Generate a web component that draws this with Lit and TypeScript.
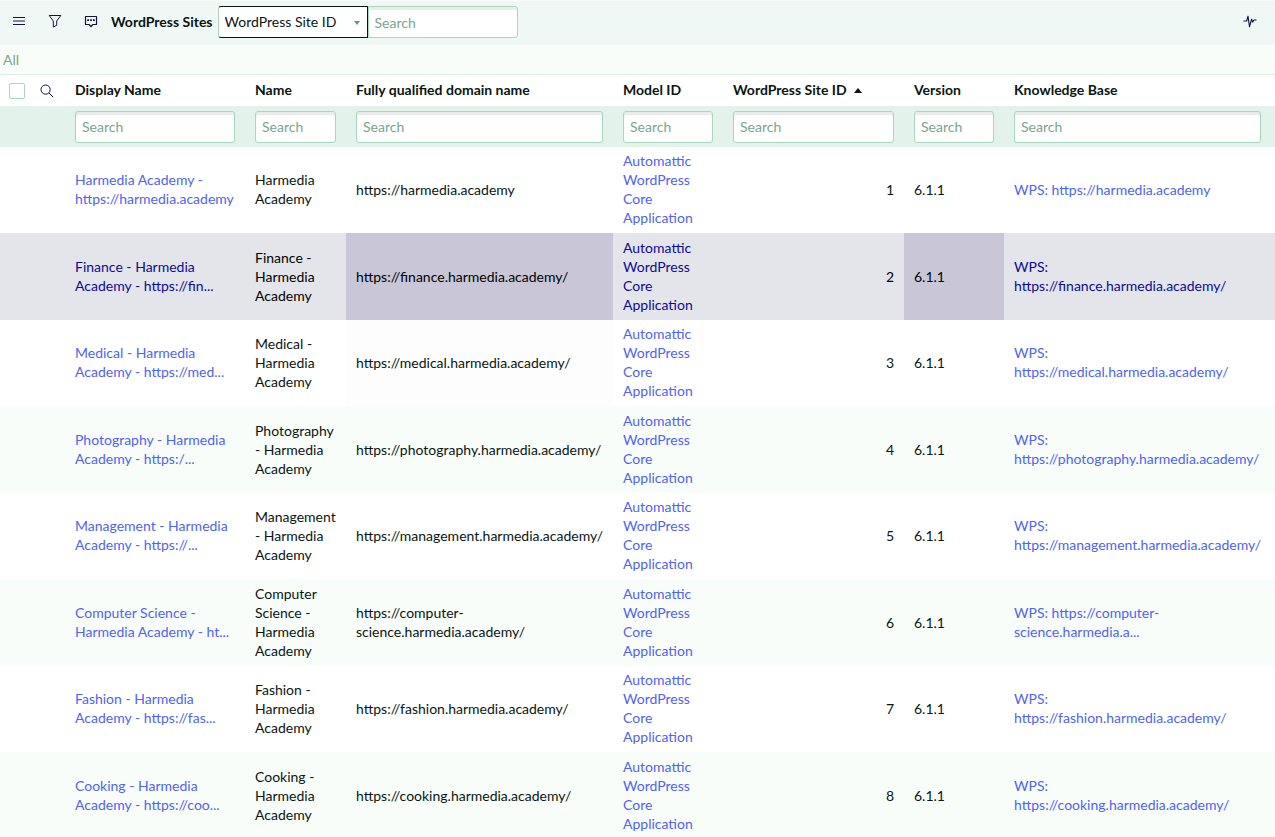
import { LitElement, html, css, svg } from "lit";
import { customElement, state } from "lit/decorators.js";
import { classMap } from "lit/directives/class-map.js";

interface Site {
  display: string;
  name: string;
  domain: string;
  id: number;
  kb: string;
}

const SITES: Site[] = [
  { display: "Harmedia Academy - https://harmedia.academy", name: "Harmedia Academy", domain: "https://harmedia.academy", id: 1, kb: "WPS: https://harmedia.academy" },
  { display: "Finance - Harmedia Academy - https://fin...", name: "Finance - Harmedia Academy", domain: "https://finance.harmedia.academy/", id: 2, kb: "WPS: https://finance.harmedia.academy/" },
  { display: "Medical - Harmedia Academy - https://med...", name: "Medical - Harmedia Academy", domain: "https://medical.harmedia.academy/", id: 3, kb: "WPS: https://medical.harmedia.academy/" },
  { display: "Photography - Harmedia Academy - https:/...", name: "Photography - Harmedia Academy", domain: "https://photography.harmedia.academy/", id: 4, kb: "WPS: https://photography.harmedia.academy/" },
  { display: "Management - Harmedia Academy - https://...", name: "Management - Harmedia Academy", domain: "https://management.harmedia.academy/", id: 5, kb: "WPS: https://management.harmedia.academy/" },
  { display: "Computer Science - Harmedia Academy - ht...", name: "Computer Science - Harmedia Academy", domain: "https://computer-science.harmedia.academy/", id: 6, kb: "WPS: https://computer-science.harmedia.a..." },
  { display: "Fashion - Harmedia Academy - https://fas...", name: "Fashion - Harmedia Academy", domain: "https://fashion.harmedia.academy/", id: 7, kb: "WPS: https://fashion.harmedia.academy/" },
  { display: "Cooking - Harmedia Academy - https://coo...", name: "Cooking - Harmedia Academy", domain: "https://cooking.harmedia.academy/", id: 8, kb: "WPS: https://cooking.harmedia.academy/" },
];

const COLUMNS = [
  { key: "display", label: "Display Name" },
  { key: "name", label: "Name" },
  { key: "domain", label: "Fully qualified domain name" },
  { key: "model", label: "Model ID" },
  { key: "id", label: "WordPress Site ID" },
  { key: "version", label: "Version" },
  { key: "kb", label: "Knowledge Base" },
];

const menuIcon = svg`<path d="M1 3.5h12M1 7h12M1 10.5h12"/>`;
const filterIcon = svg`<path d="M1.2 1.5h11.6L8.7 7v4.3L5.3 13V7z" stroke-linejoin="round"/>`;
const chatIcon = svg`<path d="M1.5 2.5h11v8H9L7 12.5 5 10.5H1.5z" stroke-linejoin="round" stroke-width="1.2"/><path d="M3.2 6.2h1.8M6.1 6.2h1.8M9 6.2h1.8" stroke-width="1.7"/>`;
const pulseIcon = svg`<path d="M.5 7h3.2L5 2.2l1.5 10.6L8.6 5.2l1 3L10.8 6h2.7" stroke-linejoin="round" stroke-width="1.1"/>`;
const searchIcon = svg`<circle cx="5.6" cy="5.6" r="4.6"/><path d="M9 9l4.2 4.2"/>`;

@customElement("app-root")
export class AppRoot extends LitElement {
  @state() private active = 2;

  static styles = css`
    :host {
      display: block;
      height: 100vh;
      overflow: auto;
      scrollbar-width: none;
      background: #fff;
      color: #0a1512;
      font: 14px/19px Lato, "Open Sans", sans-serif;
    }
    * { box-sizing: border-box; }
    input, select, button { font: inherit; color: inherit; margin: 0; }
    a { color: #4f63f5; text-decoration: none; }
    svg { display: block; fill: none; stroke: #14143c; }

    .bar {
      display: flex;
      align-items: center;
      height: 45px;
      padding: 0 18px 2px 1px;
      background: #eff8f4;
      border-top: 1px solid #f8fdfa;
    }
    .icon-button {
      display: flex;
      align-items: center;
      justify-content: center;
      width: 36px;
      height: 32px;
      padding: 0;
      border: 0;
      background: none;
    }
    .bar .icon-button { padding-bottom: 2px; }
    .pulse { width: 14px; margin-left: auto; }
    .title { margin: 0 5px 0 2px; padding-bottom: 2px; font-size: 14px; font-weight: 700; white-space: nowrap; }
    .picker { position: relative; width: 150px; }
    .picker select {
      appearance: none;
      width: 100%;
      height: 32px;
      padding: 0 24px 2px 6px;
      border: 1px solid #0c1512;
      border-left-color: #a9d6bf;
      border-radius: 3px 0 0 3px;
      background: #fff;
      outline: 0;
    }
    .caret { position: absolute; right: 8px; top: 15px; fill: #5c9c7d; stroke: none; pointer-events: none; }

    .search {
      display: block;
      width: 100%;
      height: 32px;
      padding: 0 6px;
      border: 1px solid #a9d6bf;
      border-radius: 3px;
      background: #fff;
      box-shadow: inset 0 3px 0 #e9eceb;
      outline: 0;
    }
    .search::placeholder { color: #7ba491; opacity: 1; }
    .bar .search { width: 150px; border-radius: 0 3px 3px 0; }

    .crumbs {
      height: 30px;
      padding: 5px 3px 0;
      background: #f8fdfa;
      border-bottom: 1px solid #dcf0e6;
    }
    .crumbs a { color: #7ba491; }

    table { width: 100%; table-layout: fixed; border-collapse: collapse; }
    .w-check { width: 32px; }
    .w-look { width: 33px; }
    .w-display { width: 180px; }
    .w-name { width: 101px; }
    .w-domain { width: 267px; }
    .w-model { width: 110px; }
    .w-id { width: 181px; }
    .w-version { width: 100px; }
    .w-kb { width: 271px; }

    th, td { padding: 0 10px; text-align: left; vertical-align: middle; }
    th:last-child, td:last-child { padding-right: 14px; }
    .heads th { height: 31px; padding-bottom: 2px; font-weight: 700; white-space: nowrap; }
    .heads .tool { padding: 0 0 0 9px; }
    .heads .look { padding: 0 0 0 8px; }
    .look .icon-button { width: 14px; height: 14px; }
    .sort { display: inline-block; margin-left: 7px; vertical-align: 2px; fill: #0a1512; stroke: none; }
    .check {
      display: block;
      appearance: none;
      width: 16px;
      height: 16px;
      border: 1px solid #a9d6bf;
      border-radius: 2px;
      background: #fff;
    }
    .filters td { height: 41px; background: #e3f2ea; }

    .row td { padding-top: 4px; padding-bottom: 6px; }
    .row:nth-child(even) { background: #f8fdfa; }
    .row:nth-child(even) td { padding-top: 5px; }
    .row .number { text-align: right; }
    .row .domain { padding-right: 8px; }
    .row.active { background: #e4e5ea; color: #000; }
    .row.active a { color: #0c0a96; }
    .row.active .domain, .row.active .version { background: #c9c7d7; }
    .row.active + .row .domain { background: #fdfdfd; }
  `;

  private icon(shape: unknown, size = 14) {
    return html`<svg width=${size} height=${size} viewBox="0 0 14 14" aria-hidden="true">${shape}</svg>`;
  }

  private row(site: Site) {
    return html`
      <tr class=${classMap({ row: true, active: site.id === this.active })} @mouseenter=${() => (this.active = site.id)}>
        <td></td>
        <td></td>
        <td><a href="#">${site.display}</a></td>
        <td>${site.name}</td>
        <td class="domain">${site.domain}</td>
        <td><a href="#">Automattic WordPress Core Application</a></td>
        <td class="number">${site.id}</td>
        <td class="version">6.1.1</td>
        <td><a href="#">${site.kb}</a></td>
      </tr>
    `;
  }

  render() {
    return html`
      <header class="bar">
        <button class="icon-button" aria-label="Menu">${this.icon(menuIcon)}</button>
        <button class="icon-button" aria-label="Filter">${this.icon(filterIcon)}</button>
        <button class="icon-button" aria-label="Comments">${this.icon(chatIcon)}</button>
        <h1 class="title">WordPress Sites</h1>
        <div class="picker">
          <select aria-label="Search field">
            ${["WordPress Site ID", "Display Name", "Name", "Version"].map((o) => html`<option>${o}</option>`)}
          </select>
          <svg class="caret" width="6" height="4" viewBox="0 0 6 4" aria-hidden="true"><path d="M0 0h6L3 4z" /></svg>
        </div>
        <input class="search" type="text" placeholder="Search" aria-label="Search sites" />
        <button class="icon-button pulse" aria-label="Activity">${this.icon(pulseIcon)}</button>
      </header>
      <nav class="crumbs" aria-label="Filters"><a href="#">All</a></nav>
      <table>
        <colgroup>
          <col class="w-check" />
          <col class="w-look" />
          ${COLUMNS.map((c) => html`<col class="w-${c.key}" />`)}
        </colgroup>
        <thead>
          <tr class="heads">
            <th class="tool"><input class="check" type="checkbox" aria-label="Select all" /></th>
            <th class="look"><button class="icon-button" aria-label="Toggle column search">${this.icon(searchIcon)}</button></th>
            ${COLUMNS.map(
              (c) => html`<th scope="col">${c.label}${c.key === "id"
                ? html`<svg class="sort" width="8" height="5" viewBox="0 0 8 5" aria-hidden="true"><path d="M0 5h8L4 0z" /></svg>`
                : ""}</th>`
            )}
          </tr>
          <tr class="filters">
            <td></td>
            <td></td>
            ${COLUMNS.map((c) => html`<td><input class="search" type="text" placeholder="Search" aria-label="Search ${c.label}" /></td>`)}
          </tr>
        </thead>
        <tbody>
          ${SITES.map((s) => this.row(s))}
        </tbody>
      </table>
    `;
  }
}
